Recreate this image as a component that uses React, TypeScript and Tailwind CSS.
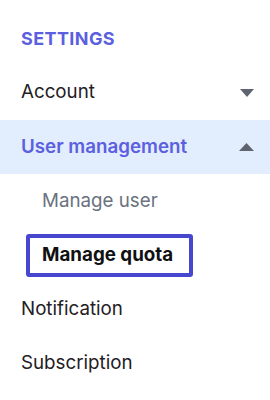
export default function App() {
  const font = { fontFamily: "Inter, 'Noto Sans', sans-serif" };

  return (
    <div className="w-[270px] h-[400px] bg-white overflow-hidden" style={font}>
      <div className="mt-[11px] h-[54px] flex items-center px-[21px]">
        <span className="text-[18px] font-bold tracking-[0.4px] text-[#5b5fe0]">SETTINGS</span>
      </div>

      {/* Account */}
      <div className="h-[55px] flex items-center justify-between pl-[21px] pr-[16px]">
        <span className="text-[18.75px] text-[#1f2024]">Account</span>
        <svg width="14" height="8" viewBox="0 0 14 8">
          <path d="M0 0 H14 L7 8 Z" fill="#5f6570" />
        </svg>
      </div>

      {/* User management, expanded */}
      <div className="h-[54px] flex items-center justify-between pl-[21px] pr-[16px] bg-[#e2edfd]">
        <span className="text-[18.75px] font-semibold text-[#5b5fe0]">User management</span>
        <svg width="15" height="8" viewBox="0 0 15 8">
          <path d="M0 8 H15 L7.5 0 Z" fill="#5f6570" />
        </svg>
      </div>

      <div className="h-[54px] flex items-center pl-[42px]">
        <span className="text-[18.75px] text-[#6b7280]">Manage user</span>
      </div>

      <div className="h-[54px] flex items-center pl-[26px]">
        <span className="h-[43px] flex items-center pl-[12px] pr-[16px] border-[4px] border-[#4646cf] rounded-[3px] text-[18.75px] font-bold text-[#111]">
          Manage quota
        </span>
      </div>

      <div className="h-[54px] flex items-center pl-[21px]">
        <span className="text-[18.75px] text-[#1f2024]">Notification</span>
      </div>

      <div className="h-[54px] flex items-center pl-[21px]">
        <span className="text-[18.75px] text-[#1f2024]">Subscription</span>
      </div>
    </div>
  );
}
